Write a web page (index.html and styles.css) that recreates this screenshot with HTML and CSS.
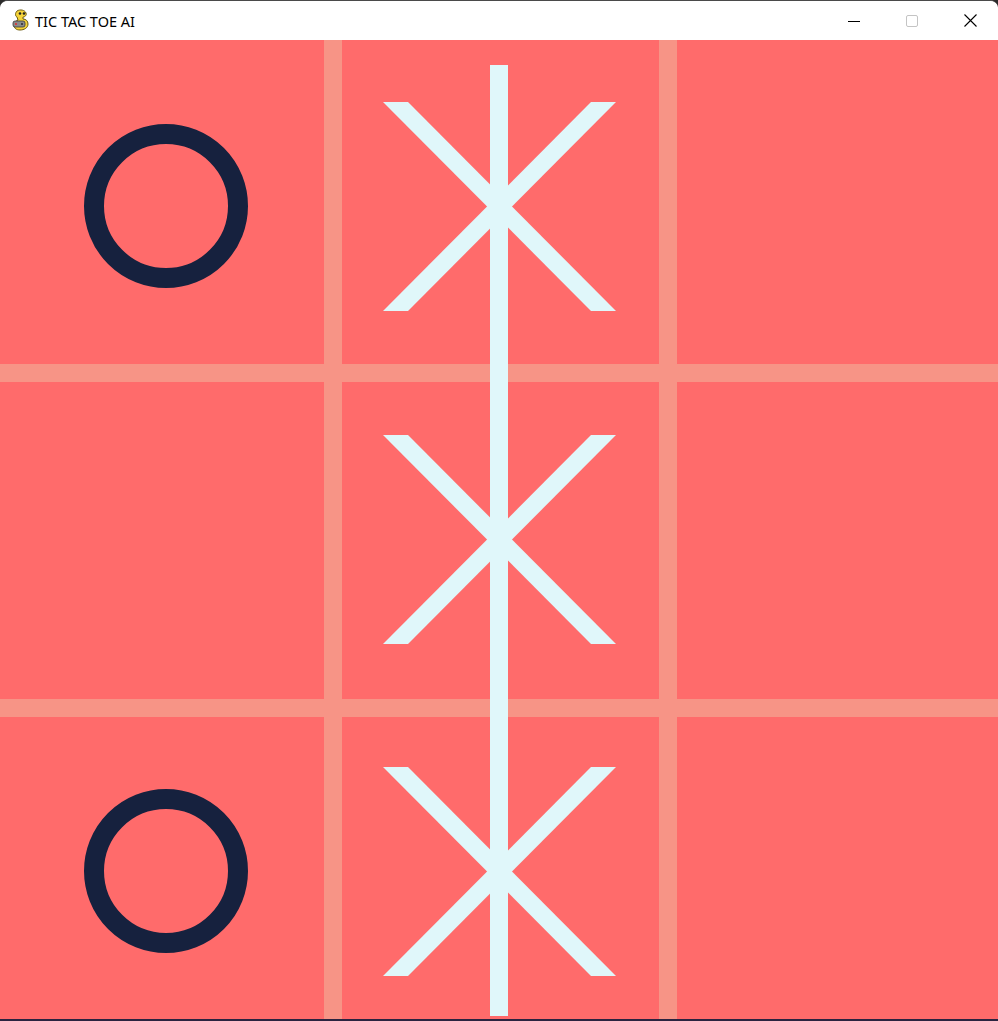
FILE: index.html
```html
<!DOCTYPE html>
<html lang="en">
<head>
<meta charset="utf-8">
<title>TIC TAC TOE AI</title>
<link rel="stylesheet" href="styles.css">
</head>
<body>
<div class="window">
  <header class="titlebar">
    <div class="title">
      <svg class="app-icon" width="20" height="22" viewBox="0 0 20 22">
        <path d="M6 2 C9 0 14 1 15 4 C16 6 14 8 12 8 L12 10 C15 10 17 12 17 15 C17 19 13 21 9 21 C5 21 3 19 3 16 C3 13 5 12 7 11 L6 8 C4 7 4 4 6 2 Z" fill="#f5d33a" stroke="#6b5a10" stroke-width="1"/>
        <circle cx="9" cy="4.5" r="1.3" fill="#222"/>
        <circle cx="13" cy="4.5" r="1.3" fill="#222"/>
        <rect x="2" y="12" width="12" height="6" rx="2" fill="#8a8a8a" stroke="#3a3a3a" stroke-width="0.8"/>
        <circle cx="5" cy="15" r="1.1" fill="#d33"/>
        <circle cx="11" cy="15" r="1.1" fill="#333"/>
      </svg>
      <span class="title-text">TIC TAC TOE AI</span>
    </div>
    <div class="controls">
      <div class="ctrl">
        <svg width="12" height="12" viewBox="0 0 12 12"><line x1="0" y1="6.5" x2="12" y2="6.5" stroke="#000" stroke-width="1"/></svg>
      </div>
      <div class="ctrl">
        <svg width="12" height="12" viewBox="0 0 12 12"><rect x="0.5" y="0.5" width="11" height="11" rx="1.5" fill="none" stroke="#c4c4c4" stroke-width="1"/></svg>
      </div>
      <div class="ctrl">
        <svg width="13" height="13" viewBox="0 0 13 13"><path d="M0.5 0.5 L12.5 12.5 M12.5 0.5 L0.5 12.5" stroke="#000" stroke-width="1.1"/></svg>
      </div>
    </div>
  </header>
  <main class="board">
    <div class="cell"><svg class="mark mark-o o-r0" width="164" height="164" viewBox="0 0 164 164"><circle cx="82" cy="82" r="72" fill="none" stroke="#16213e" stroke-width="20"/></svg></div>
    <div class="cell"><svg class="mark mark-x x-r0" width="233" height="209" viewBox="0 0 233 209"><polygon points="0,0 25,0 233,209 208,209"/><polygon points="208,0 233,0 25,209 0,209"/></svg></div>
    <div class="cell"></div>
    <div class="cell"></div>
    <div class="cell"><svg class="mark mark-x x-r1" width="233" height="209" viewBox="0 0 233 209"><polygon points="0,0 25,0 233,209 208,209"/><polygon points="208,0 233,0 25,209 0,209"/></svg></div>
    <div class="cell"></div>
    <div class="cell"><svg class="mark mark-o o-r2" width="164" height="164" viewBox="0 0 164 164"><circle cx="82" cy="82" r="72" fill="none" stroke="#16213e" stroke-width="20"/></svg></div>
    <div class="cell"><svg class="mark mark-x x-r2" width="233" height="209" viewBox="0 0 233 209"><polygon points="0,0 25,0 233,209 208,209"/><polygon points="208,0 233,0 25,209 0,209"/></svg></div>
    <div class="cell"></div>
    <div class="win-line"></div>
  </main>
</div>
</body>
</html>
```
FILE: styles.css
```css
html, body {
  margin: 0;
  padding: 0;
  background: #2b2b2b;
  width: 998px;
  height: 1021px;
  overflow: hidden;
}

.window {
  display: flex;
  flex-direction: column;
  width: 998px;
  height: 1021px;
  box-sizing: border-box;
  border-top: 1px solid #4a4a4a;
  border-bottom: 2px solid #2a2340;
  border-radius: 8px 8px 0 0;
  overflow: hidden;
  background: #ffffff;
}

.titlebar {
  height: 39px;
  flex: 0 0 39px;
  display: flex;
  align-items: center;
  justify-content: space-between;
  background: #ffffff;
}

.title {
  display: flex;
  align-items: center;
  padding-left: 11px;
  gap: 4px;
}

.app-icon {
  display: block;
  margin-top: -1px;
}

.title-text {
  font-family: "Noto Sans", "Open Sans", sans-serif;
  font-size: 14.5px;
  color: #000000;
}

.controls {
  display: flex;
  height: 100%;
  margin-right: -1px;
}

.ctrl {
  width: 58px;
  height: 100%;
  display: flex;
  align-items: center;
  justify-content: center;
}

.ctrl svg {
  display: block;
}

.board {
  position: relative;
  flex: 1;
  display: grid;
  grid-template-columns: 324px 317px 1fr;
  grid-template-rows: 324px 317px 1fr;
  gap: 18px;
  background: #f79486;
}

.cell {
  background: #ff6b6b;
  overflow: hidden;
}

.mark {
  display: block;
}

.mark-x polygon {
  fill: #e0f7fa;
}

.o-r0 { margin: 84px 0 0 84px; }
.o-r2 { margin: 72px 0 0 84px; }

.x-r0 { margin: 62px 0 0 41px; }
.x-r1 { margin: 53px 0 0 41px; }
.x-r2 { margin: 50px 0 0 41px; }

.win-line {
  position: absolute;
  left: 490px;
  top: 25px;
  width: 18px;
  height: 951px;
  background: #e0f7fa;
}
```
